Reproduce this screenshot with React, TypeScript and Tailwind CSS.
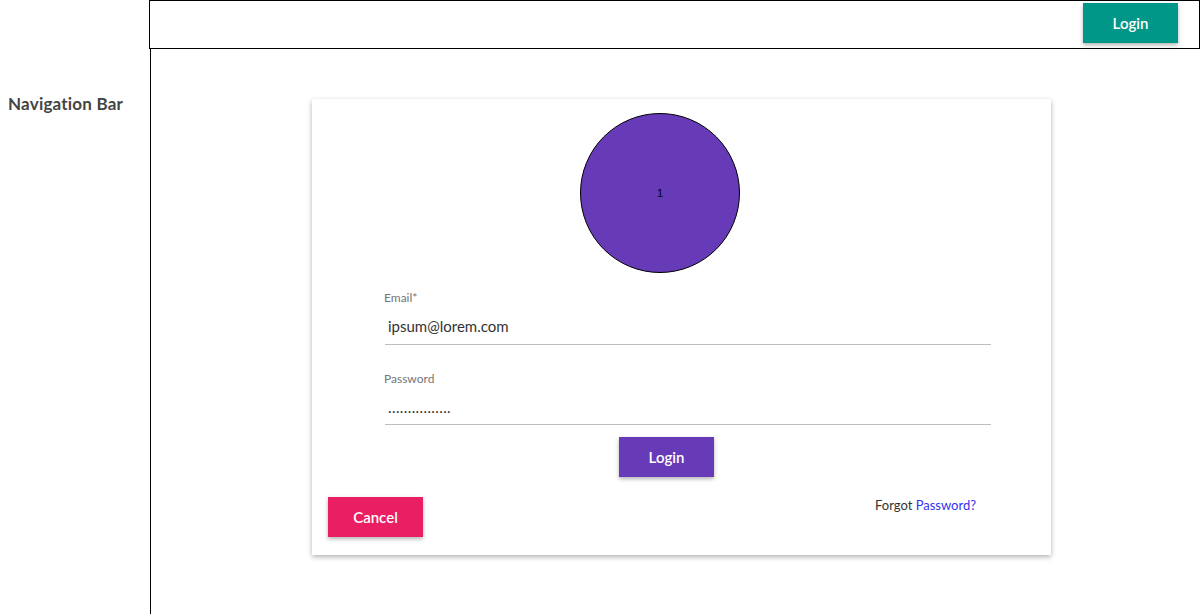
import React from "react";

export default function App() {
  const font = { fontFamily: "Lato, 'Open Sans', sans-serif" };
  return (
    <div className="w-[1200px] h-[614px] flex bg-white overflow-hidden" style={font}>
      <div className="w-[149px] shrink-0 pt-[94px] pl-[8px]">
        <div className="text-[17px] font-bold text-[#444444] leading-[20px] tracking-[0.2px]">Navigation Bar</div>
      </div>
      <div className="flex-1 flex flex-col">
        <div className="h-[49px] border border-black flex items-start justify-end pr-[21px] pt-[2px]">
          <button className="w-[95px] h-[40px] bg-[#009688] text-white text-[15px] font-semibold shadow-[0_2px_4px_rgba(0,0,0,0.3)]">
            Login
          </button>
        </div>
        <div className="flex-1 ml-px border-l border-black">
          <div className="ml-[161px] mt-[50px] w-[739px] bg-white shadow-[0_2px_5px_rgba(0,0,0,0.3)] pt-[14px] pb-[18px] flex flex-col">
            <div className="ml-[268px] w-[160px] h-[160px] rounded-full bg-[#673ab7] border border-black flex items-center justify-center">
              <span className="text-[11px] text-black" style={{ fontFamily: "'Liberation Sans', sans-serif" }}>1</span>
            </div>
            <div className="ml-[72px] w-[607px] mt-[17px] flex flex-col">
              <div className="text-[12px] text-[#757575] leading-[16px]">Email*</div>
              <div className="mt-[11px] pl-[3px] h-[28px] text-[15px] text-[#333333] leading-[18px] border-b border-[#bdbdbd] ml-px">
                ipsum@lorem.com
              </div>
              <div className="mt-[26px] text-[12px] text-[#757575] leading-[16px]">Password</div>
              <div className="mt-[11px] pl-[3px] h-[27px] text-[15px] text-[#333333] leading-[18px] border-b border-[#bdbdbd] ml-px tracking-[0.4px]">
                ................
              </div>
            </div>
            <div className="ml-[307px] mt-[12px]">
              <button className="w-[95px] h-[40px] bg-[#673ab7] text-white text-[15px] font-semibold shadow-[0_2px_4px_rgba(0,0,0,0.3)]">
                Login
              </button>
            </div>
            <div className="mt-[20px] flex items-start">
              <button className="ml-[16px] w-[95px] h-[40px] bg-[#e91e63] text-white text-[15px] font-semibold shadow-[0_2px_4px_rgba(0,0,0,0.3)]">
                Cancel
              </button>
              <div className="ml-[452px] -mt-[1px] text-[13px] leading-[18px] text-[#333333]">
                Forgot <span className="text-[#3333ee]">Password?</span>
              </div>
            </div>
          </div>
        </div>
      </div>
    </div>
  );
}
